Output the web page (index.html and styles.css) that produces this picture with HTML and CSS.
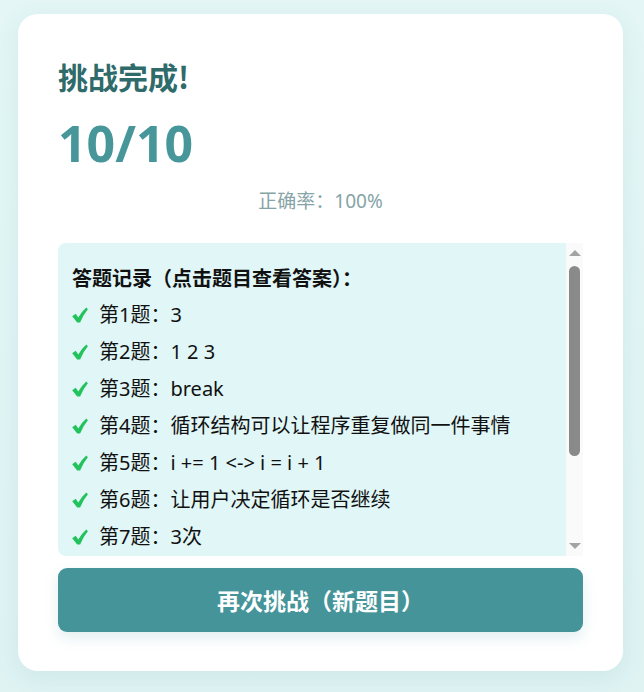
FILE: index.html
```html
<!DOCTYPE html>
<html lang="zh-CN">
<head>
<meta charset="utf-8">
<title>挑战完成</title>
<link rel="stylesheet" href="styles.css">
</head>
<body>
<div class="card">
  <h1 class="title">挑战完成!</h1>
  <div class="score">10/10</div>
  <div class="rate">正确率：100%</div>
  <div class="record">
    <div class="record-list">
      <div class="record-head">答题记录（点击题目查看答案）：</div>
      <div class="item"><svg class="ok" viewBox="0 0 16 16"><path d="M0.2 9.3 L3.7 6.8 L6.3 10.4 Q9.8 4.6 14.3 0.6 L15.9 2.3 Q11.2 7.8 8.1 15.5 L5.2 15.5 Z"/></svg>第1题：3</div>
      <div class="item"><svg class="ok" viewBox="0 0 16 16"><path d="M0.2 9.3 L3.7 6.8 L6.3 10.4 Q9.8 4.6 14.3 0.6 L15.9 2.3 Q11.2 7.8 8.1 15.5 L5.2 15.5 Z"/></svg>第2题：1 2 3</div>
      <div class="item"><svg class="ok" viewBox="0 0 16 16"><path d="M0.2 9.3 L3.7 6.8 L6.3 10.4 Q9.8 4.6 14.3 0.6 L15.9 2.3 Q11.2 7.8 8.1 15.5 L5.2 15.5 Z"/></svg>第3题：break</div>
      <div class="item"><svg class="ok" viewBox="0 0 16 16"><path d="M0.2 9.3 L3.7 6.8 L6.3 10.4 Q9.8 4.6 14.3 0.6 L15.9 2.3 Q11.2 7.8 8.1 15.5 L5.2 15.5 Z"/></svg>第4题：循环结构可以让程序重复做同一件事情</div>
      <div class="item"><svg class="ok" viewBox="0 0 16 16"><path d="M0.2 9.3 L3.7 6.8 L6.3 10.4 Q9.8 4.6 14.3 0.6 L15.9 2.3 Q11.2 7.8 8.1 15.5 L5.2 15.5 Z"/></svg>第5题：i += 1 &lt;-&gt; i = i + 1</div>
      <div class="item"><svg class="ok" viewBox="0 0 16 16"><path d="M0.2 9.3 L3.7 6.8 L6.3 10.4 Q9.8 4.6 14.3 0.6 L15.9 2.3 Q11.2 7.8 8.1 15.5 L5.2 15.5 Z"/></svg>第6题：让用户决定循环是否继续</div>
      <div class="item"><svg class="ok" viewBox="0 0 16 16"><path d="M0.2 9.3 L3.7 6.8 L6.3 10.4 Q9.8 4.6 14.3 0.6 L15.9 2.3 Q11.2 7.8 8.1 15.5 L5.2 15.5 Z"/></svg>第7题：3次</div>
    </div>
    <div class="scrollbar">
      <span class="arrow arrow-up"></span>
      <span class="thumb"></span>
      <span class="track-rest"></span>
      <span class="arrow arrow-down"></span>
    </div>
  </div>
  <button class="again">再次挑战（新题目）</button>
</div>
</body>
</html>
```

FILE: styles.css
```css
html, body {
  margin: 0;
  padding: 0;
}
body {
  min-height: 692px;
  background: linear-gradient(180deg, #e4f6f6 0%, #dff3f3 100%);
  font-family: "Noto Sans", "Noto Sans CJK SC", sans-serif;
  padding: 14px 21px 21px 18px;
  box-sizing: border-box;
}
.card {
  background: #ffffff;
  border-radius: 20px;
  padding: 40px 40px 39px 40px;
  box-shadow: 0 6px 24px rgba(60, 140, 140, 0.10);
  box-sizing: border-box;
  height: 657px;
}
.title {
  margin: 0;
  font-size: 30px;
  font-weight: 700;
  color: #2e6b6a;
  line-height: 44px;
  font-family: "Noto Sans CJK SC", sans-serif;
}
.score {
  margin-top: 14px;
  font-size: 50px;
  font-weight: 700;
  color: #46969a;
  line-height: 62px;
  font-family: "Noto Sans", "Noto Sans CJK SC", sans-serif;
}
.rate {
  margin-top: 15px;
  text-align: center;
  font-size: 19px;
  color: #86a4a6;
  line-height: 24px;
}
.record {
  margin-top: 30px;
  height: 313px;
  display: flex;
  background: #e0f6f7;
  border-radius: 8px 0 0 8px;
  overflow: hidden;
  color: #111;
  font-size: 20px;
}
.record-list {
  flex: 1;
  padding: 16px 14px 0 14px;
  overflow: hidden;
}
.scrollbar {
  width: 17px;
  flex: none;
  background: #fafafa;
  display: flex;
  flex-direction: column;
  align-items: center;
}
.arrow {
  width: 0;
  height: 0;
  border-left: 6px solid transparent;
  border-right: 6px solid transparent;
}
.arrow-up {
  margin-top: 7px;
  border-bottom: 6px solid #a3a3a3;
}
.arrow-down {
  margin-bottom: 7px;
  border-top: 6px solid #a3a3a3;
}
.thumb {
  margin-top: 10px;
  width: 11px;
  height: 190px;
  border-radius: 6px;
  background: #8a8a8a;
}
.track-rest {
  flex: 1;
}
.record-head {
  font-weight: 700;
  line-height: 37px;
  font-family: "Noto Sans CJK SC", sans-serif;
}
.item {
  line-height: 37px;
  white-space: nowrap;
  display: flex;
  align-items: center;
}
.ok {
  width: 16px;
  height: 16px;
  margin: 1px 11px 0 0;
  fill: #22c35c;
  flex: none;
}
.again {
  display: block;
  width: 100%;
  margin-top: 12px;
  height: 64px;
  border: none;
  border-radius: 9px;
  background: #45949a;
  color: #ffffff;
  font-size: 23px;
  font-weight: 700;
  font-family: "Noto Sans CJK SC", sans-serif;
  box-shadow: 0 6px 14px rgba(69, 148, 154, 0.15);
  cursor: pointer;
}
```
